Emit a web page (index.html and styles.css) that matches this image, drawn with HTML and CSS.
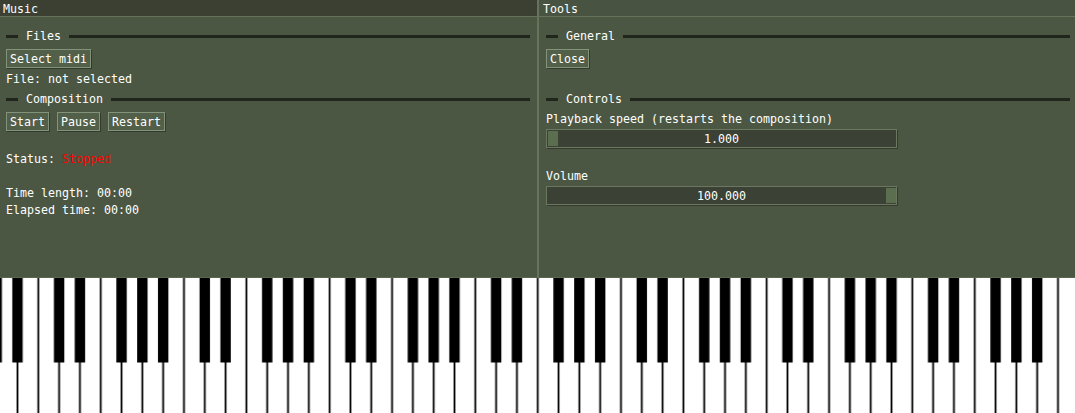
FILE: index.html
```html
<!DOCTYPE html>
<html>
<head>
<meta charset="utf-8">
<title>Music</title>
<link rel="stylesheet" href="styles.css">
</head>
<body>
<div class="app">
  <div class="windows">
    <section class="window window-music">
      <header class="titlebar titlebar-active">Music</header>
      <div class="content">
        <div class="sep"><span class="sep-dash"></span><span class="sep-label">Files</span><span class="sep-line"></span></div>
        <button class="btn gap-after-sep">Select midi</button>
        <p class="text gap-tight">File: not selected</p>
        <div class="sep gap-after-sep"><span class="sep-dash"></span><span class="sep-label">Composition</span><span class="sep-line"></span></div>
        <div class="btn-row gap-after-sep">
          <button class="btn">Start</button>
          <button class="btn">Pause</button>
          <button class="btn">Restart</button>
        </div>
        <p class="text gap-blank">Status: <span class="status-stopped">Stopped</span></p>
        <p class="text gap-blank">Time length: 00:00</p>
        <p class="text gap-tight">Elapsed time: 00:00</p>
      </div>
    </section>
    <section class="window window-tools">
      <header class="titlebar">Tools</header>
      <div class="content">
        <div class="sep"><span class="sep-dash"></span><span class="sep-label">General</span><span class="sep-line"></span></div>
        <button class="btn gap-after-sep">Close</button>
        <div class="sep gap-controls"><span class="sep-dash"></span><span class="sep-label">Controls</span><span class="sep-line"></span></div>
        <p class="text gap-after-sep">Playback speed (restarts the composition)</p>
        <div class="slider gap-tight"><span class="grab grab-min"></span><span class="slider-value">1.000</span></div>
        <p class="text gap-blank">Volume</p>
        <div class="slider gap-tight"><span class="grab grab-max"></span><span class="slider-value">100.000</span></div>
      </div>
    </section>
  </div>
  <svg class="piano" width="1075" height="135" viewBox="0 0 1075 135" xmlns="http://www.w3.org/2000/svg">
    <defs>
      <pattern id="keyLines" patternUnits="userSpaceOnUse" x="7.1" y="0" width="20.81" height="135">
        <rect x="9.5" y="0" width="1.8" height="135" fill="#000"/>
      </pattern>
      <pattern id="blackKeys" patternUnits="userSpaceOnUse" x="38.31" y="0" width="145.67" height="135">
        <rect x="15.61" y="0" width="10.4" height="84.5" fill="#000"/>
        <rect x="36.42" y="0" width="10.4" height="84.5" fill="#000"/>
        <rect x="78.04" y="0" width="10.4" height="84.5" fill="#000"/>
        <rect x="98.85" y="0" width="10.4" height="84.5" fill="#000"/>
        <rect x="119.66" y="0" width="10.4" height="84.5" fill="#000"/>
      </pattern>
    </defs>
    <rect x="0" y="0" width="1075" height="135" fill="#fff"/>
    <rect x="0" y="0" width="1075" height="135" fill="url(#keyLines)"/>
    <rect x="0" y="0" width="1062" height="135" fill="url(#blackKeys)"/>
  </svg>
</div>
</body>
</html>
```

FILE: styles.css
```css
* {
  box-sizing: border-box;
  margin: 0;
  padding: 0;
}

html, body {
  width: 1075px;
  height: 413px;
  overflow: hidden;
  background: #ffffff;
}

body {
  font-family: "DejaVu Sans Mono", "Liberation Mono", monospace;
  font-size: 11.63px;
  line-height: 14px;
  color: #ffffff;
}

.app {
  width: 1075px;
  height: 413px;
  overflow: hidden;
  display: flex;
  flex-direction: column;
}

.windows {
  display: flex;
  height: 278px;
  flex: none;
}

.window {
  width: 540px;
  flex: none;
  display: flex;
  flex-direction: column;
  background: #4b5743;
  border-bottom: 1px solid #5a6750;
}

.window-music {
  margin-left: -2px;
  border-right: 1px solid #66735b;
}

.window-tools {
  border-left: 1px solid #66735b;
}

.titlebar {
  height: 17px;
  padding: 2px 0 0 5px;
  background: #485441;
  border-bottom: 1px solid #66735b;
  white-space: nowrap;
}

.window-tools .titlebar {
  padding-left: 4px;
}

.titlebar-active {
  background: #3b4033;
}

.content {
  display: flex;
  flex-direction: column;
  align-items: flex-start;
  padding: 12px 7px 0 8px;
}

.window-tools .content {
  padding: 12px 8px 0 7px;
}

.sep {
  display: flex;
  align-items: flex-start;
  width: 100%;
  height: 13px;
}

.sep-dash {
  flex: none;
  width: 12px;
  height: 3px;
  margin-top: 6px;
  background: #20261c;
}

.sep-label {
  flex: none;
  margin: 0 8px;
  white-space: nowrap;
}

.sep-line {
  flex: 1;
  height: 3px;
  margin-top: 6px;
  background: #20261c;
}

.btn {
  font: inherit;
  line-height: 14px;
  color: #ffffff;
  height: 19px;
  padding: 2px 3px 1px;
  background: #525f49;
  border: 1px solid #83927a;
  box-shadow: 1px 1px 0 #343b2d;
  white-space: nowrap;
}

.btn-row {
  display: flex;
  gap: 8px;
}

.text {
  white-space: pre;
  height: 13px;
}

.status-stopped {
  color: #ff0000;
}

.gap-after-sep {
  margin-top: 7px;
}

.gap-tight {
  margin-top: 4px;
}

.gap-blank {
  margin-top: 21px;
}

.gap-controls {
  margin-top: 24px;
}

.slider {
  position: relative;
  width: 351px;
  height: 19px;
  padding-top: 2px;
  text-align: center;
  background: #3b4134;
  border: 1px solid #6b785f;
  box-shadow: 1px 1px 0 #343b2d;
}

.grab {
  position: absolute;
  top: 1px;
  width: 10px;
  height: 15px;
  background: #5b6e4f;
}

.grab-min {
  left: 1px;
}

.grab-max {
  right: 0;
}

.slider-value {
  position: relative;
  white-space: nowrap;
}

.piano {
  display: block;
  flex: none;
}
```
